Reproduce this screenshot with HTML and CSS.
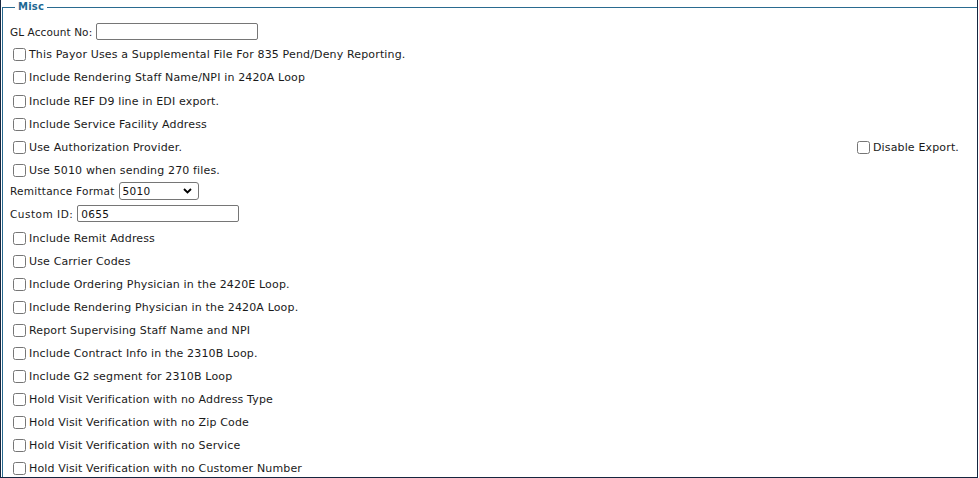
FILE: index.html
```html
<!DOCTYPE html>
<html>
<head>
<meta charset="utf-8">
<link rel="stylesheet" href="styles.css">
</head>
<body>
<div class="frame">
  <fieldset class="misc">
    <legend class="misc-legend">Misc</legend>
    <div class="row row-field">
      <label class="field-label gl" for="gl">GL Account No:</label>
      <input class="text-input" id="gl" type="text">
    </div>
    <div class="row"><label class="check"><input type="checkbox"><span>This Payor Uses a Supplemental File For 835 Pend/Deny Reporting.</span></label></div>
    <div class="row"><label class="check"><input type="checkbox"><span>Include Rendering Staff Name/NPI in 2420A Loop</span></label></div>
    <div class="row row-tall"><label class="check"><input type="checkbox"><span>Include REF D9 line in EDI export.</span></label></div>
    <div class="row"><label class="check"><input type="checkbox"><span>Include Service Facility Address</span></label></div>
    <div class="row row-split">
      <label class="check"><input type="checkbox"><span>Use Authorization Provider.</span></label>
      <label class="check"><input type="checkbox"><span>Disable Export.</span></label>
    </div>
    <div class="row"><label class="check"><input type="checkbox"><span>Use 5010 when sending 270 files.</span></label></div>
    <div class="row row-select">
      <label class="field-label" for="rf">Remittance Format</label>
      <div class="select-box">
        <select id="rf" class="select"><option>5010</option></select>
        <svg class="chev" width="9" height="6" viewBox="0 0 9 6"><path d="M1 1 L4.5 4.5 L8 1" fill="none" stroke="#000" stroke-width="1.8"/></svg>
      </div>
    </div>
    <div class="row row-custom">
      <label class="field-label cid" for="cid">Custom ID:</label>
      <input class="text-input" id="cid" type="text" value="0655">
    </div>
    <div class="row"><label class="check"><input type="checkbox"><span>Include Remit Address</span></label></div>
    <div class="row"><label class="check"><input type="checkbox"><span>Use Carrier Codes</span></label></div>
    <div class="row"><label class="check"><input type="checkbox"><span>Include Ordering Physician in the 2420E Loop.</span></label></div>
    <div class="row"><label class="check"><input type="checkbox"><span>Include Rendering Physician in the 2420A Loop.</span></label></div>
    <div class="row"><label class="check"><input type="checkbox"><span>Report Supervising Staff Name and NPI</span></label></div>
    <div class="row"><label class="check"><input type="checkbox"><span>Include Contract Info in the 2310B Loop.</span></label></div>
    <div class="row"><label class="check"><input type="checkbox"><span>Include G2 segment for 2310B Loop</span></label></div>
    <div class="row"><label class="check"><input type="checkbox"><span>Hold Visit Verification with no Address Type</span></label></div>
    <div class="row"><label class="check"><input type="checkbox"><span>Hold Visit Verification with no Zip Code</span></label></div>
    <div class="row"><label class="check"><input type="checkbox"><span>Hold Visit Verification with no Service</span></label></div>
    <div class="row"><label class="check"><input type="checkbox"><span>Hold Visit Verification with no Customer Number</span></label></div>
  </fieldset>
</div>
</body>
</html>
```
FILE: styles.css
```css
html, body {
  margin: 0;
  padding: 0;
  background: #fff;
}
body {
  font-family: "DejaVu Sans", Verdana, sans-serif;
  font-size: 11px;
  letter-spacing: 0.15px;
  color: #1a1a1a;
}
.frame {
  box-sizing: border-box;
  width: 978px;
  height: 478px;
  border: 1px solid #16263f;
  border-top: none;
  overflow: hidden;
}
.misc {
  margin: 1px 0 0 1px;
  padding: 7px 0 0 6px;
  border: 1px solid #2a6b90;
  border-right: none;
  min-width: 0;
}
.misc-legend {
  padding: 0 3px;
  margin-left: 6px;
  font-weight: bold;
  font-size: 10px;
  letter-spacing: 0.2px;
  line-height: 12px;
  color: #1d6894;
}
.row {
  height: 23px;
  display: flex;
  align-items: center;
}
.row-tall {
  height: 24px;
}
.row-select {
  height: 18px;
}
.row-custom {
  height: 27px;
}
.row-split {
  justify-content: space-between;
  padding-right: 18px;
}
.field-label {
  margin-left: 1px;
  margin-right: 4px;
  font-size: 10.5px;
  letter-spacing: 0.25px;
}
.field-label.gl {
  letter-spacing: 0.1px;
}
.field-label.cid {
  letter-spacing: 0.5px;
}
.check {
  display: flex;
  align-items: center;
}
.check input {
  width: 13px;
  height: 13px;
  margin: 0 3px 0 4px;
}
.text-input {
  box-sizing: border-box;
  width: 162px;
  height: 17px;
  margin: 0;
  padding: 0 3px;
  border: 1px solid #767676;
  border-radius: 2px;
  font-family: "DejaVu Sans", Verdana, sans-serif;
  font-size: 10.5px;
  letter-spacing: 0.3px;
  color: #111;
}
.select-box {
  position: relative;
  width: 80px;
  height: 18px;
}
.select {
  box-sizing: border-box;
  width: 80px;
  height: 18px;
  margin: 0;
  padding: 0 3px;
  border: 1px solid #767676;
  border-radius: 3px;
  background: #fff;
  appearance: none;
  -webkit-appearance: none;
  font-family: "DejaVu Sans", Verdana, sans-serif;
  font-size: 10.5px;
  letter-spacing: 0.3px;
  color: #111;
}
.chev {
  position: absolute;
  right: 7px;
  top: 6px;
  pointer-events: none;
}
```
